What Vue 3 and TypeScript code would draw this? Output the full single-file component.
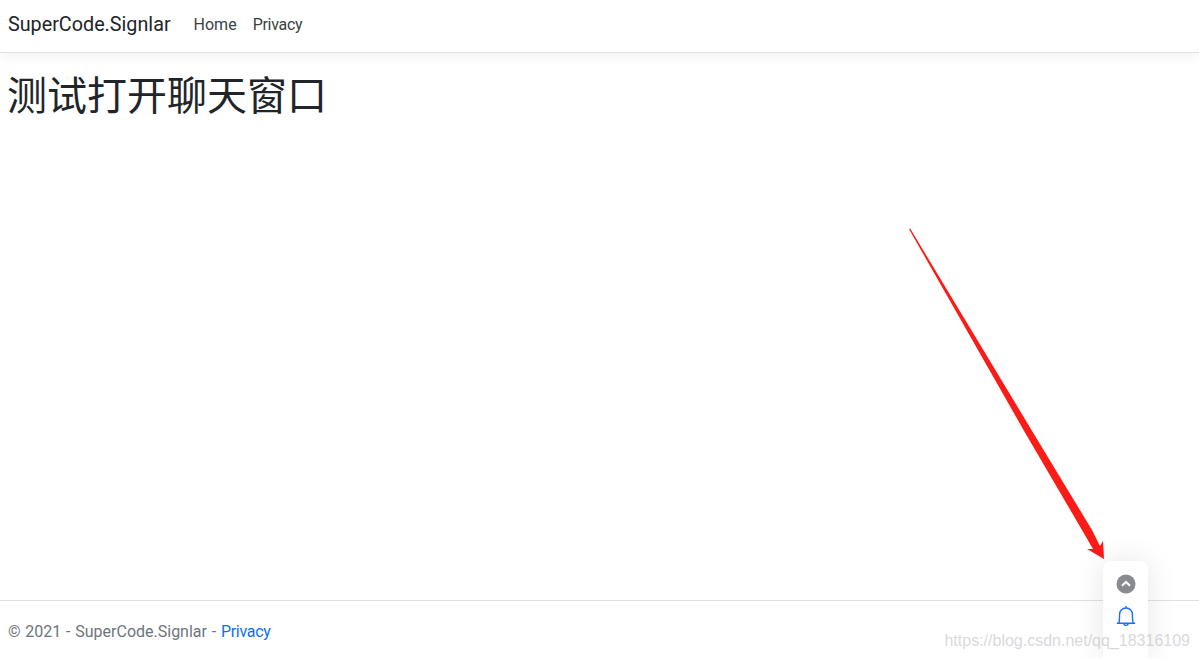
<script setup lang="ts">
const navItems: string[] = ['Home', 'Privacy']
</script>

<template>
  <div class="page">
    <header class="navbar">
      <a class="brand">SuperCode.Signlar</a>
      <nav class="nav">
        <a v-for="item in navItems" :key="item" class="nav-link">{{ item }}</a>
      </nav>
    </header>
    <main class="main">
      <h1 class="title">测试打开聊天窗口</h1>
    </main>
    <footer class="footer">
      © 2021 - SuperCode.Signlar - <a class="footer-link">Privacy</a>
    </footer>

    <svg class="arrow" width="210" height="340" viewBox="0 0 210 340">
      <path d="M4 4 L5.2 3.6 L126.5 205 L187 305 L195 321 L198 316 L199 334 L182 324 L188 324 L177 305 L118.5 205 Z" fill="#fb1c17" />
    </svg>

    <aside class="widget">
      <span class="up">
        <svg width="20" height="20" viewBox="0 0 20 20">
          <circle cx="10" cy="10" r="9.5" fill="#8a8a93" />
          <path d="M6 11.8 L10 8 L14 11.8" fill="none" stroke="#fff" stroke-width="2.2" />
        </svg>
      </span>
      <svg class="bell" width="20" height="22" viewBox="0 0 20 22">
        <path d="M10 1 V3 M3 18 C3.4 15 3.6 12 3.6 9.5 C3.6 5.6 6.4 3 10 3 C13.6 3 16.4 5.6 16.4 9.5 C16.4 12 16.6 15 17 18 M0.8 18.3 H19.2 M7.8 18.3 C7.8 21 12.2 21 12.2 18.3" fill="none" stroke="#1f6bff" stroke-width="1.4" />
      </svg>
    </aside>

    <div class="watermark">https://blog.csdn.net/qq_18316109</div>
  </div>
</template>

<style>
html, body { margin: 0; padding: 0; background: #fff; }
</style>

<style scoped>
.page {
  position: relative;
  height: 659px;
  overflow: hidden;
  display: flex;
  flex-direction: column;
  font-family: Roboto, "Noto Sans CJK SC", sans-serif;
  color: #212529;
  background: #fff;
}
.navbar {
  flex: none;
  display: flex;
  align-items: center;
  padding: 0 8px 3px;
  box-sizing: border-box;
  height: 53px;
  border-bottom: 1px solid #dee2e6;
  box-shadow: 0 4px 12px rgba(0, 0, 0, 0.05);
}
.brand { font-size: 19.75px; margin-right: 23px; }
.nav { display: flex; gap: 16px; font-size: 16px; }
.nav-link { color: #3a3f44; }
.nav-link:last-child { letter-spacing: -0.3px; }
.main { flex: 1; padding: 0 7px; }
.title {
  margin: 16px 0 0;
  font-family: "Noto Sans CJK SC", sans-serif;
  font-size: 40px;
  font-weight: 400;
  line-height: 48px;
}
.footer {
  flex: none;
  height: 59px;
  box-sizing: border-box;
  border-top: 1px solid #dee2e6;
  padding: 21px 8px 0;
  font-size: 16px;
  line-height: 20px;
  word-spacing: 0.8px;
  color: #6c757d;
}
.footer-link { color: #0d6efd; letter-spacing: -0.3px; }
.arrow { position: absolute; left: 905px; top: 225px; }
.widget {
  position: absolute;
  left: 1103px;
  top: 561px;
  width: 45px;
  height: 98px;
  display: flex;
  flex-direction: column;
  align-items: center;
  padding-top: 13px;
  gap: 11px;
  box-sizing: border-box;
  background: #fff;
  border-radius: 8px 8px 0 0;
  box-shadow: 0 0 30px rgba(0, 0, 0, 0.1);
}
.up { display: block; height: 20px; }
.watermark {
  position: absolute;
  right: 9px;
  top: 632px;
  font-family: "Liberation Sans", sans-serif;
  font-size: 16px;
  color: rgba(190, 190, 195, 0.6);
}
</style>
